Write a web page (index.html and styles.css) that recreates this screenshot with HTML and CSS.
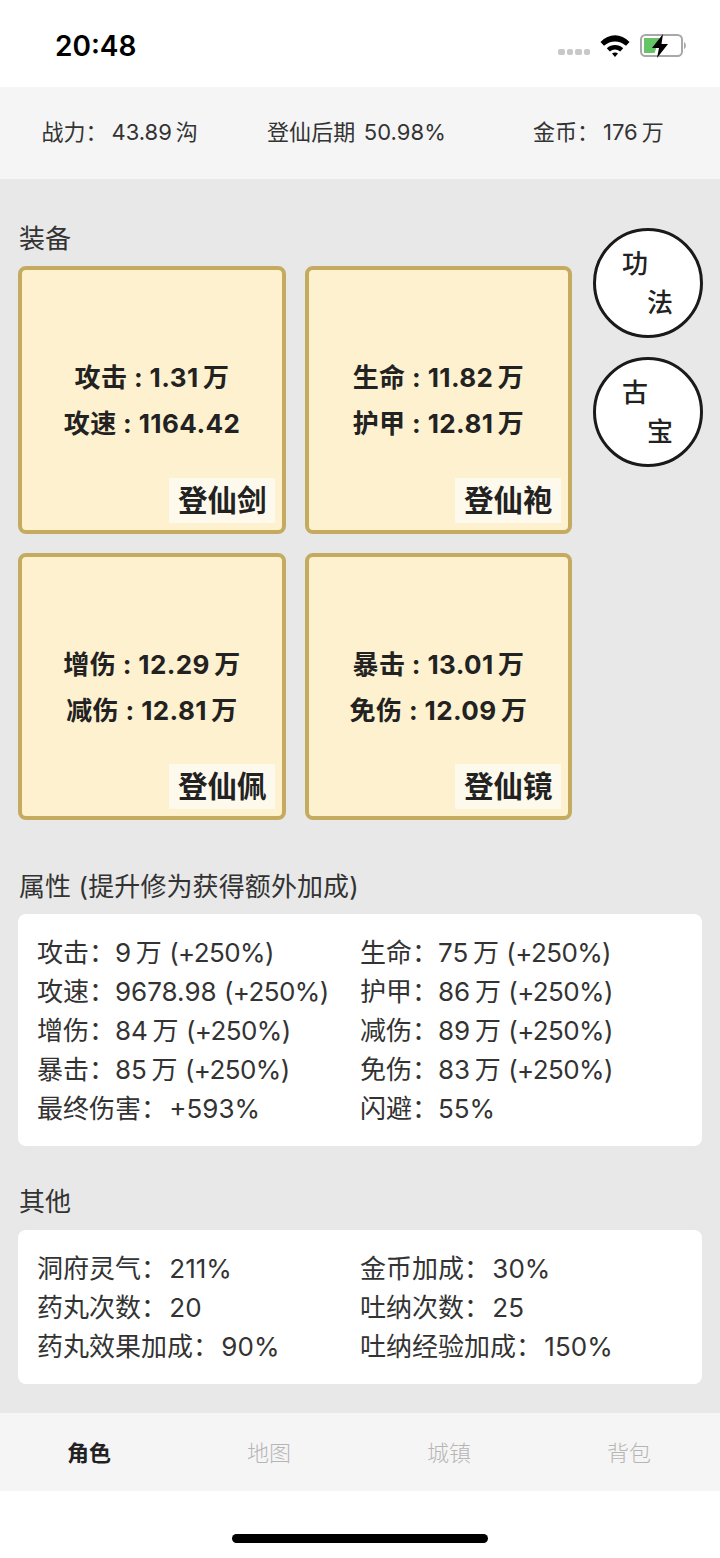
FILE: index.html
```html
<!DOCTYPE html>
<html lang="zh-CN">
<head>
    <meta charset="UTF-8">
    <meta name="viewport" content="width=device-width, initial-scale=1.0">
    <title>角色</title>
    <link rel="stylesheet" href="styles.css">
</head>
<body>
    <div class="status-bar">
        <span class="time">20:48</span>
        <div class="status-icons">
            <div class="signal"><i></i><i></i><i></i><i></i></div>
            <svg class="wifi" width="30" height="22" viewBox="0 0 30 22">
                <path d="M0.5 7C9 -2 21 -2 29.5 7L26 10.8C19.5 5 10.5 5 4 10.8Z" fill="#000"/>
                <path d="M6.8 13.3C11.5 9 18.5 9 23.2 13.3L20.2 16.4C17 13.7 13 13.7 9.8 16.4Z" fill="#000"/>
                <path d="M12 18.6C13.8 17.2 16.2 17.2 18 18.6L15 22Z" fill="#000"/>
            </svg>
            <svg class="battery" width="48" height="26" viewBox="0 0 48 26">
                <rect x="1" y="2" width="41" height="21" rx="4.5" fill="#fff" stroke="#a8a8a8" stroke-width="2"/>
                <path d="M44 9C46.5 10 46.5 15 44 16Z" fill="#a8a8a8"/>
                <path d="M4 5H20L14.5 20H4Z" fill="#65c466"/>
                <path d="M23 1L12 15H19L17 25L28 11H21.5Z" fill="#000"/>
            </svg>
        </div>
    </div>

    <div class="top-bar">
        <span>战力：&thinsp;43.89&thinsp;沟</span>
        <span class="realm">登仙后期 50.98%</span>
        <span>金币：&thinsp;176&thinsp;万</span>
    </div>

    <div class="main">
        <div class="equip-section">
            <div class="equip-left">
                <div class="section-title equip-title">装备</div>
                <div class="equip-grid">
                    <div class="equip-card">
                        <div class="equip-stat">攻击 : 1.31&thinsp;万</div>
                        <div class="equip-stat">攻速 : 1164.42</div>
                        <div class="equip-name">登仙剑</div>
                    </div>
                    <div class="equip-card">
                        <div class="equip-stat">生命 : 11.82&thinsp;万</div>
                        <div class="equip-stat">护甲 : 12.81&thinsp;万</div>
                        <div class="equip-name">登仙袍</div>
                    </div>
                    <div class="equip-card">
                        <div class="equip-stat">增伤 : 12.29&thinsp;万</div>
                        <div class="equip-stat">减伤 : 12.81&thinsp;万</div>
                        <div class="equip-name">登仙佩</div>
                    </div>
                    <div class="equip-card">
                        <div class="equip-stat">暴击 : 13.01&thinsp;万</div>
                        <div class="equip-stat">免伤 : 12.09&thinsp;万</div>
                        <div class="equip-name">登仙镜</div>
                    </div>
                </div>
            </div>
            <div class="round-buttons">
                <div class="round-button"><span>功</span><span class="second">法</span></div>
                <div class="round-button"><span>古</span><span class="second">宝</span></div>
            </div>
        </div>

        <div class="section-title attr-title">属性 (提升修为获得额外加成)</div>
        <div class="panel">
            <span>攻击：9&thinsp;万 <em>(+250%)</em></span><span>生命：75&thinsp;万 <em>(+250%)</em></span>
            <span>攻速：9678.98 <em>(+250%)</em></span><span>护甲：86&thinsp;万 <em>(+250%)</em></span>
            <span>增伤：84&thinsp;万 <em>(+250%)</em></span><span>减伤：89&thinsp;万 <em>(+250%)</em></span>
            <span>暴击：85&thinsp;万 <em>(+250%)</em></span><span>免伤：83&thinsp;万 <em>(+250%)</em></span>
            <span>最终伤害：&hairsp;+593%</span><span>闪避：55%</span>
        </div>

        <div class="section-title other-title">其他</div>
        <div class="panel">
            <span>洞府灵气：&hairsp;211%</span><span>金币加成：&hairsp;30%</span>
            <span>药丸次数：&hairsp;20</span><span>吐纳次数：&hairsp;25</span>
            <span>药丸效果加成：&hairsp;90%</span><span>吐纳经验加成：&hairsp;150%</span>
        </div>
    </div>

    <div class="tab-bar">
        <span class="tab active">角色</span>
        <span class="tab">地图</span>
        <span class="tab">城镇</span>
        <span class="tab">背包</span>
    </div>

    <div class="home-area">
        <div class="home-indicator"></div>
    </div>
</body>
</html>
```

FILE: styles.css
```css
* {
    box-sizing: border-box;
}
body {
    margin: 0;
    width: 720px;
    height: 1558px;
    overflow: hidden;
    background-color: #fff;
    color: #333;
    font-family: Inter, "Noto Sans CJK SC", sans-serif;
}
.status-bar {
    height: 87px;
    display: flex;
    justify-content: space-between;
    align-items: center;
    padding: 4px 32px 0 55px;
}
.time {
    font-size: 28px;
    font-weight: 600;
    color: #000;
}
.status-icons {
    display: flex;
    align-items: center;
    gap: 9px;
}
.signal {
    display: flex;
    gap: 2px;
    margin: 13px 1px 0 0;
}
.signal i {
    width: 6.5px;
    height: 6px;
    border-radius: 2px;
    background-color: #c8c8c8;
}
.wifi {
    margin-right: 1px;
}
.top-bar {
    height: 92px;
    background-color: #f5f5f5;
    display: grid;
    grid-template-columns: repeat(3, 1fr);
    justify-items: center;
    align-items: center;
    padding: 0 2px 6px 0;
    font-size: 22px;
    color: #333;
}
.realm {
    margin-right: 5px;
    word-spacing: 2px;
    letter-spacing: 0.1px;
}
.main {
    height: 1234px;
    background-color: #e8e8e8;
    padding: 0 18px;
}
.equip-section {
    display: flex;
    gap: 21px;
}
.section-title {
    font-size: 26px;
    line-height: 36px;
    color: #333;
    padding-left: 1px;
    letter-spacing: 0.1px;
}
.equip-title {
    padding-top: 42px;
    height: 87px;
}
.equip-grid {
    display: grid;
    grid-template-columns: 268px 267px;
    grid-template-rows: 268px 267px;
    gap: 19px;
}
.equip-card {
    position: relative;
    background-color: #fdf1cf;
    border: 4px solid #c5ab60;
    border-radius: 8px;
    display: flex;
    flex-direction: column;
    justify-content: center;
    align-items: center;
    gap: 10px;
    padding-top: 2px;
}
.equip-stat {
    font-size: 26px;
    line-height: 36px;
    font-weight: 700;
    color: #222;
    letter-spacing: 0.4px;
}
.equip-name {
    position: absolute;
    right: 7px;
    bottom: 7px;
    padding: 0 8.5px;
    height: 45px;
    line-height: 45px;
    background-color: #fdf9ec;
    font-size: 29.5px;
    font-weight: 700;
    color: #222;
}
.round-buttons {
    padding-top: 49px;
    display: flex;
    flex-direction: column;
    gap: 19px;
}
.round-button {
    width: 110px;
    height: 110px;
    border: 3.5px solid #1a1a1a;
    border-radius: 50%;
    background-color: #fff;
    display: flex;
    flex-direction: column;
    padding: 13px 0 0 26px;
    font-size: 26px;
    font-weight: 500;
    line-height: 39px;
    color: #222;
}
.round-button .second {
    padding-left: 25px;
}
.attr-title {
    padding-top: 49px;
    height: 94px;
}
.other-title {
    padding-top: 38px;
    height: 84px;
}
.panel {
    background-color: #fff;
    border-radius: 8px;
    display: grid;
    grid-template-columns: 323px 1fr;
    padding: 19px 19px 18px;
    font-size: 26px;
    line-height: 39px;
    color: #333;
    white-space: nowrap;
}
.panel em {
    font-style: normal;
    letter-spacing: -0.6px;
}
.tab-bar {
    height: 78px;
    background-color: #f5f5f5;
    display: grid;
    grid-template-columns: repeat(4, 180px);
    align-items: center;
    justify-items: center;
    padding: 0 0 2px 0;
}
.tab {
    font-size: 22px;
    font-weight: 300;
    color: #b5b5b5;
    margin-right: 2px;
}
.tab.active {
    font-weight: 700;
    color: #222;
}
.home-area {
    height: 67px;
    display: flex;
    justify-content: center;
    padding-top: 43px;
}
.home-indicator {
    width: 256px;
    height: 9px;
    border-radius: 5px;
    background-color: #000;
}
```
